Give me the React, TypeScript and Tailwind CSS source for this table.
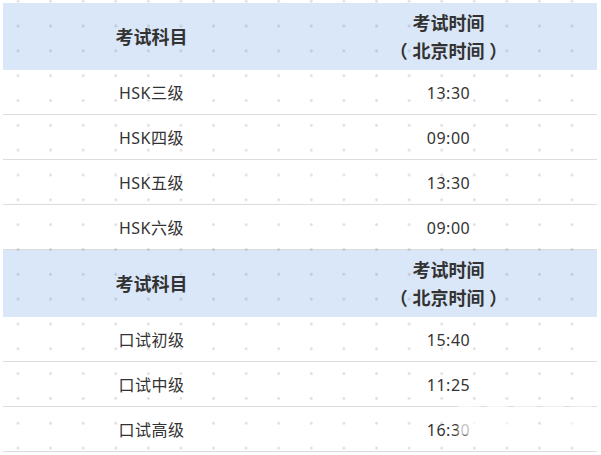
import * as React from 'react';

type Section = {
  rows: [string, string][];
};

const sections: Section[] = [
  {
    rows: [
      ['HSK三级', '13:30'],
      ['HSK四级', '09:00'],
      ['HSK五级', '13:30'],
      ['HSK六级', '09:00'],
    ],
  },
  {
    rows: [
      ['口试初级', '15:40'],
      ['口试中级', '11:25'],
      ['口试高级', '16:30'],
    ],
  },
];

function HeaderRow() {
  return (
    <div className="grid h-[67px] grid-cols-2 bg-[#dae7f8] text-[18px] font-bold leading-[28px] text-[#333]">
      <div className="flex items-center justify-center">考试科目</div>
      <div className="flex flex-col items-center justify-center whitespace-pre">
        <span>考试时间</span>
        <span>（ 北京时间 ）</span>
      </div>
    </div>
  );
}

export default function App() {
  return (
    <div
      className="relative h-[455px] w-[601px] overflow-hidden bg-white pt-[3px] pl-[3px] text-[#333]"
      style={{ fontFamily: '"Noto Sans", "Noto Sans CJK SC", sans-serif' }}
    >
      <div className="w-[594px]">
        {sections.map((section, i) => (
          <div key={i}>
            <HeaderRow />
            {section.rows.map(([subject, time]) => (
              <div
                key={subject}
                className="grid h-[45px] grid-cols-2 border-b border-[#dcdcdc] text-[16px] tracking-[0.5px]"
              >
                <div className="flex items-center justify-center pt-[2px]">{subject}</div>
                <div className="flex items-center justify-center pt-[2px]">{time}</div>
              </div>
            ))}
          </div>
        ))}
      </div>

      {/* dotted watermark pattern on top of the table */}
      <div className="pointer-events-none absolute inset-0 bg-[radial-gradient(circle,rgba(0,0,0,0.13)_1px,transparent_1.6px)] bg-[size:32.6px_24.83px] bg-[position:1.7px_13.6px]" />

      {/* faint white watermark smudge, bottom right */}
      <div className="pointer-events-none absolute left-[458px] top-[405px] flex gap-[6px]">
        <div className="h-[30px] w-[22px] bg-white/70 blur-[1px]" />
        <div className="h-[30px] w-[22px] bg-white/70 blur-[1px]" />
        <div className="h-[30px] w-[22px] bg-white/60 blur-[1px]" />
        <div className="h-[30px] w-[22px] bg-white/60 blur-[1px]" />
        <div className="h-[30px] w-[22px] bg-white/50 blur-[1px]" />
      </div>
    </div>
  );
}
